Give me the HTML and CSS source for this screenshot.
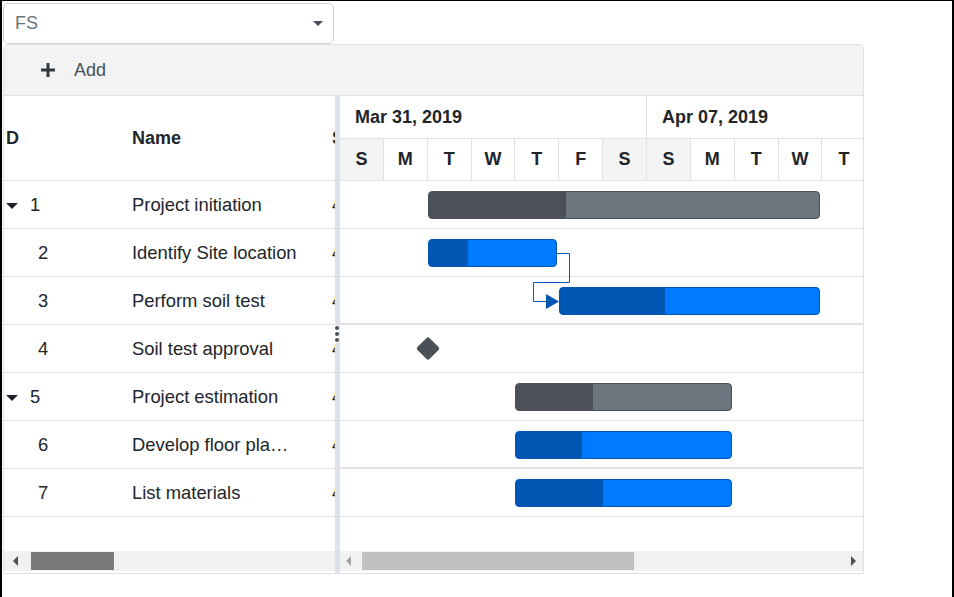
FILE: index.html
```html
<!DOCTYPE html>
<html>
<head>
<meta charset="utf-8">
<link rel="stylesheet" href="styles.css">
</head>
<body>
<div class="frame">
  <div class="dropdown">
    <span class="dd-value">FS</span>
    <span class="dd-caret"></span>
  </div>
  <div class="gantt">
    <div class="toolbar">
      <svg class="plus" width="16" height="16" viewBox="0 0 16 16"><path d="M8 1v14M1 8h14" stroke="#343a40" stroke-width="3"/></svg>
      <span class="add">Add</span>
    </div>
    <div class="main">
      <div class="grid">
        <div class="grid-head">
          <div class="c-id hd">D</div>
          <div class="c-name hd">Name</div>
          <div class="c-start hd">S</div>
        </div>
        <div class="grid-body">
          <div class="grow"><div class="c-id"><span class="exp"></span>1</div><div class="c-name">Project initiation</div><div class="c-start">4</div></div>
          <div class="grow"><div class="c-id child">2</div><div class="c-name">Identify Site location</div><div class="c-start">4</div></div>
          <div class="grow"><div class="c-id child">3</div><div class="c-name">Perform soil test</div><div class="c-start">4</div></div>
          <div class="grow"><div class="c-id child">4</div><div class="c-name">Soil test approval</div><div class="c-start">4</div></div>
          <div class="grow"><div class="c-id"><span class="exp"></span>5</div><div class="c-name">Project estimation</div><div class="c-start">4</div></div>
          <div class="grow"><div class="c-id child">6</div><div class="c-name">Develop floor pla…</div><div class="c-start">4</div></div>
          <div class="grow"><div class="c-id child">7</div><div class="c-name">List materials</div><div class="c-start">4</div></div>
        </div>
        <div class="scroll">
          <span class="arr-l dark"></span>
          <span class="thumb dark-thumb"></span>
        </div>
      </div>
      <div class="splitter"><span class="dots"><i></i><i></i><i></i></span></div>
      <div class="chart">
        <div class="tl-head">
          <div class="weeks">
            <div class="week">Mar 31, 2019</div>
            <div class="week">Apr 07, 2019</div>
          </div>
          <div class="days">
            <div class="day we">S</div><div class="day">M</div><div class="day">T</div><div class="day">W</div><div class="day">T</div><div class="day">F</div><div class="day we">S</div>
            <div class="day we">S</div><div class="day">M</div><div class="day">T</div><div class="day">W</div><div class="day">T</div>
          </div>
        </div>
        <div class="chart-body">
          <div class="crow"><div class="bar parent" style="left:88px;width:392px"><div class="prog" style="width:137px"></div></div></div>
          <div class="crow"><div class="bar" style="left:88px;width:129px"><div class="prog" style="width:39px"></div></div></div>
          <div class="crow thick"><div class="bar" style="left:219px;width:261px"><div class="prog" style="width:105px"></div></div></div>
          <div class="crow"><div class="milestone" style="left:80px"></div></div>
          <div class="crow"><div class="bar parent" style="left:175px;width:217px"><div class="prog" style="width:77px"></div></div></div>
          <div class="crow thick"><div class="bar" style="left:175px;width:217px"><div class="prog" style="width:66px"></div></div></div>
          <div class="crow"><div class="bar" style="left:175px;width:217px"><div class="prog" style="width:87px"></div></div></div>
          <svg class="links" width="523" height="340" viewBox="0 0 523 340">
            <path d="M217 72.5H229.5V101.5H193.5V120.5H207" fill="none" stroke="#0056b3" stroke-width="1"/>
            <path d="M206 113L219 120.5L206 128Z" fill="#0056b3"/>
          </svg>
        </div>
        <div class="scroll">
          <span class="arr-l light"></span>
          <span class="thumb light-thumb"></span>
          <span class="arr-r"></span>
        </div>
      </div>
    </div>
  </div>
</div>
</body>
</html>
```
FILE: styles.css
```css
* { box-sizing: border-box; }
html, body { margin: 0; padding: 0; background: #fff; }
body { font-family: "Liberation Sans", Arial, sans-serif; color: #212529; }

.frame {
  width: 954px;
  height: 597px;
  border-top: 1px solid #000;
  border-left: 2px solid #000;
  border-right: 2px solid #000;
  padding: 2px 0 0 1px;
  overflow: hidden;
}

.dropdown {
  width: 331px;
  height: 41px;
  border: 1px solid #ced4da;
  border-radius: 5px;
  display: flex;
  align-items: center;
  padding: 0 10px 0 11px;
}
.dd-value { font-size: 18px; color: #6c757d; flex: 1; }
.dd-caret {
  width: 0; height: 0;
  border-left: 5px solid transparent;
  border-right: 5px solid transparent;
  border-top: 5px solid #495057;
}

.gantt {
  width: 861px;
  height: 530px;
  border: 1px solid #dee2e6;
  border-radius: 4px 4px 0 0;
  display: flex;
  flex-direction: column;
}
.toolbar {
  height: 51px;
  background: #f3f3f3;
  border-bottom: 1px solid #dee2e6;
  display: flex;
  align-items: center;
  padding-left: 36px;
}
.plus { margin-right: 18px; }
.add { font-size: 18px; color: #495057; }

.main { flex: 1; display: flex; min-height: 0; }

.grid { width: 331px; display: flex; flex-direction: column; overflow: hidden; }
.grid-head {
  height: 85px;
  border-bottom: 1px solid #dee2e6;
  display: flex;
  align-items: center;
}
.hd { font-weight: bold; font-size: 18px; }
.c-id { width: 117px; flex: none; padding-left: 2px; display: flex; align-items: center; }
.c-name { width: 210px; flex: none; padding-left: 11px; white-space: nowrap; overflow: hidden; }
.c-start { width: 60px; flex: none; padding-left: 1px; }
.child { padding-left: 34px; }
.exp {
  width: 0; height: 0;
  border-left: 6px solid transparent;
  border-right: 6px solid transparent;
  border-top: 6px solid #212529;
  margin: 1px 12px 0 0;
}
.grid-body { flex: 1; }
.grow {
  height: 48px;
  border-bottom: 1px solid #dee2e6;
  display: flex;
  align-items: center;
  font-size: 18.4px;
  padding-top: 1px;
}

.scroll {
  height: 20px;
  margin-bottom: 2px;
  background: #f1f1f1;
  display: flex;
  align-items: center;
  position: relative;
}
.arr-l {
  width: 0; height: 0;
  border-top: 5px solid transparent;
  border-bottom: 5px solid transparent;
  border-right: 5px solid #505050;
  margin: 0 13px 0 9px;
}
.arr-l.light { border-right-color: #a3a3a3; margin: 0 11px 0 6px; }
.arr-r {
  width: 0; height: 0;
  border-top: 5px solid transparent;
  border-bottom: 5px solid transparent;
  border-left: 5px solid #505050;
  margin-left: auto;
  margin-right: 7px;
}
.thumb { height: 18px; }
.dark-thumb { width: 83px; background: #7a7a7a; }
.light-thumb { width: 272px; background: #c1c1c1; }

.splitter {
  width: 5px;
  background: #dee2e6;
  position: relative;
}
.dots {
  position: absolute;
  left: 0; top: 229px;
  display: flex; flex-direction: column; gap: 2px;
  background: #fff;
  padding: 1px 0;
}
.dots i { width: 4px; height: 4px; border-radius: 50%; background: #495057; display: block; }

.chart { width: 523px; display: flex; flex-direction: column; overflow: hidden; }
.tl-head { height: 85px; border-bottom: 1px solid #dee2e6; }
.weeks { display: flex; height: 43px; border-bottom: 1px solid #dee2e6; }
.week {
  flex: none; width: 307px;
  border-right: 1px solid #dee2e6;
  font-weight: bold; font-size: 18px;
  padding-left: 15px;
  display: flex; align-items: center;
}
.days { display: flex; height: 41px; }
.day {
  flex: none; width: 43.86px;
  border-right: 1px solid #dee2e6;
  font-weight: bold; font-size: 18px;
  display: flex; align-items: center; justify-content: center;
}
.day.we { background: #f4f4f4; }

.chart-body { flex: 1; position: relative; }
.crow { height: 48px; border-bottom: 1px solid #dee2e6; position: relative; }
.crow.thick { border-bottom-width: 2px; height: 48px; }
.bar {
  position: absolute;
  top: 10px;
  height: 28px;
  background: #007bff;
  border: 1px solid #0056b3;
  border-radius: 4px;
  overflow: hidden;
}
.bar .prog { height: 100%; background: #0056b3; }
.bar.parent { background: #6c757d; border-color: #495057; }
.bar.parent .prog { background: #4b5157; }
.milestone {
  position: absolute;
  top: 15px;
  width: 17px; height: 17px;
  background: #495057;
  border-radius: 2px;
  transform: translateX(-0.5px) rotate(45deg);
}
.links { position: absolute; left: 0; top: 0; pointer-events: none; }
```
